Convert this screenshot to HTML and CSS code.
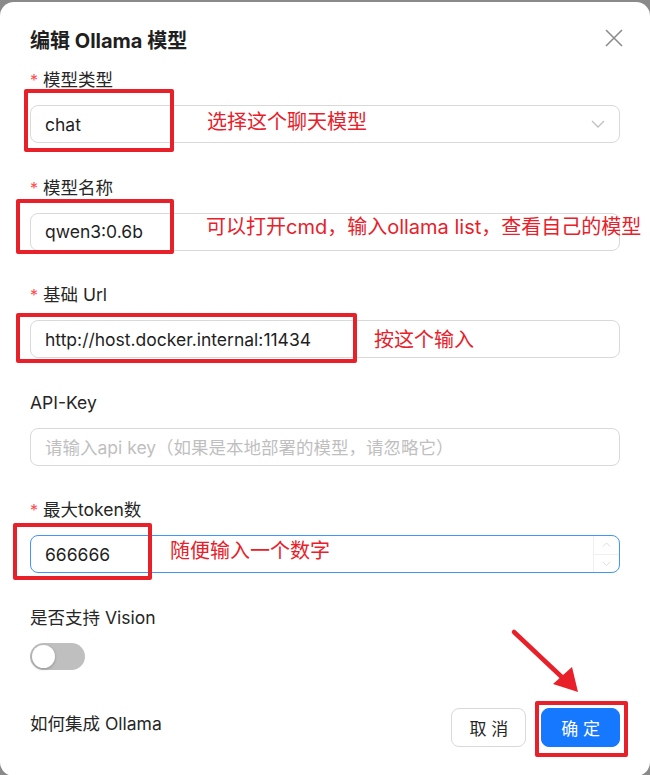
FILE: index.html
```html
<!DOCTYPE html>
<html lang="zh-CN">
<head>
  <meta charset="UTF-8" />
  <meta name="viewport" content="width=device-width, initial-scale=1.0"/>
  <title>编辑 Ollama 模型</title>
  <link rel="stylesheet" href="styles.css">
</head>
<body>

  <div class="modal">
    <div class="modal-header">
      <h2>编辑 Ollama 模型</h2>
      <button class="close" aria-label="close">
        <svg width="18" height="18" viewBox="0 0 18 18"><path d="M1 1 L17 17 M17 1 L1 17" stroke="#8c8c8c" stroke-width="1.6" fill="none"/></svg>
      </button>
    </div>

    <form class="form">
      <div class="item">
        <label class="required">模型类型</label>
        <div class="control">
          <div class="input select">
            <span>chat</span>
            <svg class="arrow" width="14" height="8" viewBox="0 0 14 8"><path d="M1 1 L7 7 L13 1" stroke="#bfbfbf" stroke-width="1.3" fill="none"/></svg>
          </div>
          <div class="mark mark-1"></div>
          <span class="note note-1">选择这个聊天模型</span>
        </div>
      </div>

      <div class="item">
        <label class="required">模型名称</label>
        <div class="control">
          <div class="input"><span>qwen3:0.6b</span></div>
          <div class="mark mark-2"></div>
          <span class="note note-2">可以打开cmd，输入ollama list，查看自己的模型</span>
        </div>
      </div>

      <div class="item">
        <label class="required">基础 Url</label>
        <div class="control">
          <div class="input"><span>http://host.docker.internal:11434</span></div>
          <div class="mark mark-3"></div>
          <span class="note note-3">按这个输入</span>
        </div>
      </div>

      <div class="item">
        <label>API-Key</label>
        <div class="control">
          <div class="input"><span class="placeholder">请输入api key（如果是本地部署的模型，请忽略它）</span></div>
        </div>
      </div>

      <div class="item">
        <label class="required">最大token数</label>
        <div class="control">
          <div class="input focused">
            <span>666666</span>
            <div class="spinner">
              <svg width="10" height="6" viewBox="0 0 10 6"><path d="M1 5 L5 1 L9 5" stroke="#d9d9d9" stroke-width="1" fill="none"/></svg>
              <svg width="10" height="6" viewBox="0 0 10 6"><path d="M1 1 L5 5 L9 1" stroke="#d9d9d9" stroke-width="1" fill="none"/></svg>
            </div>
          </div>
          <div class="mark mark-4"></div>
          <span class="note note-4">随便输入一个数字</span>
        </div>
      </div>

      <div class="item">
        <label>是否支持 Vision</label>
        <div class="switch"><span class="knob"></span></div>
      </div>
    </form>

    <div class="modal-footer">
      <a class="help">如何集成 Ollama</a>
      <div class="buttons">
        <button class="btn">取 消</button>
        <button class="btn primary">确 定</button>
      </div>
      <div class="mark mark-5"></div>
    </div>

    <svg class="pointer" width="650" height="775" viewBox="0 0 650 775">
      <line x1="514" y1="632" x2="566" y2="681" stroke="#e8202a" stroke-width="4.5" stroke-linecap="round"/>
      <polygon points="578,692 553,684 572,667" fill="#e8202a"/>
    </svg>
  </div>

</body>
</html>
```

FILE: styles.css
```css
* {
  margin: 0;
  padding: 0;
  box-sizing: border-box;
}

html, body {
  height: 100%;
  overflow: hidden;
}

body {
  background: #8a8a8a;
  font-family: 'Inter', 'Noto Sans CJK SC', sans-serif;
  color: #1f1f1f;
}

.modal {
  position: relative;
  margin-top: 2px;
  width: 650px;
  height: 774px;
  background: #fff;
  border-radius: 14px;
  padding: 23px 30px 0 30px;
}

.modal-header {
  display: flex;
  justify-content: space-between;
  align-items: center;
  height: 28px;
}

.modal-header h2 {
  font-size: 20px;
  font-weight: 700;
  color: #1f1f1f;
}

.close {
  border: none;
  background: none;
  margin-right: -3px;
  margin-top: -2px;
  display: flex;
}

.form {
  margin-top: 12px;
}

.item {
  margin-bottom: 29.5px;
}

.item label {
  display: block;
  height: 30px;
  line-height: 30px;
  margin-bottom: 10px;
  font-size: 17.5px;
  color: #262626;
}

.item label.required::before {
  content: "*";
  color: #ff4d4f;
  margin-right: 5px;
  font-size: 16px;
}

.control {
  position: relative;
}

.input {
  height: 38px;
  border: 1px solid #d9d9d9;
  border-radius: 8px;
  display: flex;
  align-items: center;
  justify-content: space-between;
  padding: 0 14px 0 14px;
  font-size: 17.5px;
  color: #1f1f1f;
}

.input .placeholder {
  color: #bfbfbf;
}

.input.focused {
  border-color: #4096ff;
  padding-right: 0;
}

.spinner {
  display: flex;
  flex-direction: column;
  height: 100%;
  width: 26px;
  border-left: 1px solid #f0f0f0;
}

.spinner svg {
  flex: 1;
  width: 100%;
  padding: 0 8px;
}

.spinner svg + svg {
  border-top: 1px solid #f0f0f0;
}

.switch {
  width: 55px;
  height: 27px;
  margin-top: 7px;
  border-radius: 14px;
  background: #bfbfbf;
  padding: 2px;
}

.switch .knob {
  display: block;
  width: 23px;
  height: 23px;
  border-radius: 50%;
  background: #fff;
  box-shadow: 0 1px 3px rgba(0, 0, 0, 0.25);
}

.modal-footer {
  position: relative;
  display: flex;
  justify-content: space-between;
  align-items: flex-start;
  margin-top: 38px;
}

.help {
  font-size: 17.5px;
  line-height: 28px;
  padding-top: 2px;
  color: #262626;
}

.buttons {
  display: flex;
  gap: 15px;
}

.btn {
  height: 39px;
  padding: 0 17px;
  border-radius: 8px;
  border: 1px solid #d9d9d9;
  background: #fff;
  font-family: inherit;
  font-size: 17px;
  color: #262626;
}

.btn.primary {
  background: #1677ff;
  border-color: #1677ff;
  color: #fff;
  padding: 0 19px;
}

/* red annotations drawn over the screenshot */
.mark {
  position: absolute;
  border: 4px solid #e8202a;
  border-radius: 2px;
}

.mark-1 { left: -6px; top: -16px; width: 150px; height: 63px; }
.mark-2 { left: -14px; top: -14px; width: 158px; height: 55px; }
.mark-3 { left: -14px; top: -7px; width: 341px; height: 50px; }
.mark-4 { left: -17px; top: -12px; width: 139px; height: 57px; }
.mark-5 { left: 505px; top: -7px; width: 93px; height: 56px; }

.note {
  position: absolute;
  transform: translateY(-50%);
  color: #e8202a;
  font-size: 20px;
  white-space: nowrap;
  line-height: 1;
}

.note-1 { left: 177px; top: 17px; }
.note-2 { left: 176px; top: 14px; }
.note-3 { left: 344px; top: 20px; }
.note-4 { left: 140px; top: 16px; }

.pointer {
  position: absolute;
  left: 0;
  top: -2px;
  pointer-events: none;
}
```
